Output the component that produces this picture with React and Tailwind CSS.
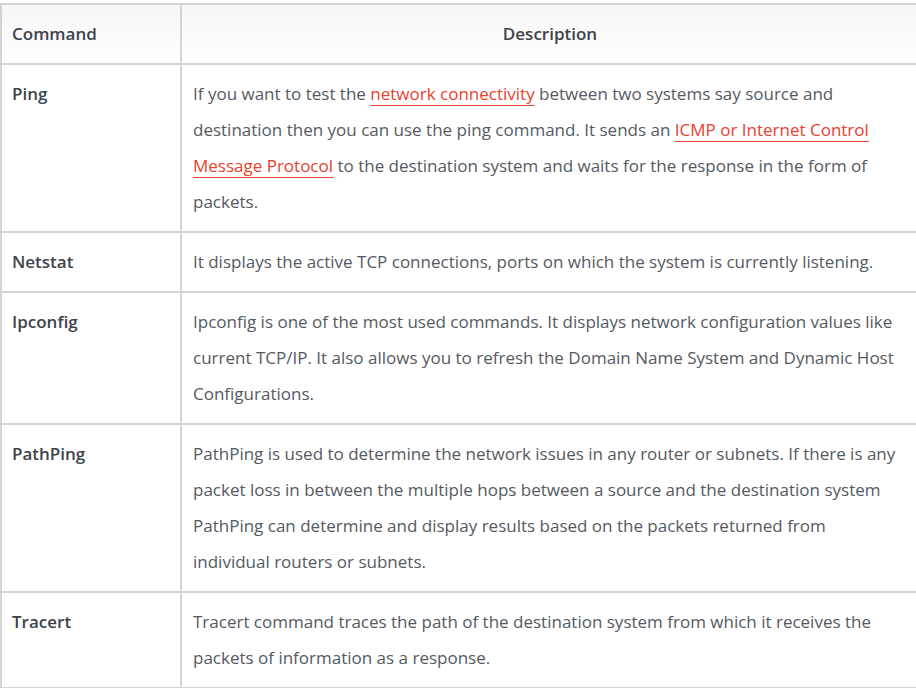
import React from "react";

const L = ({ children }) => (
  <a className="text-[#e8412e] underline decoration-[#e8412e] decoration-1 underline-offset-[5px]">{children}</a>
);

const rows = [
  {
    cmd: "Ping",
    desc: (
      <>
        If you want to test the <L>network connectivity</L> between two systems say source and destination then you can use the ping command. It sends an <L>ICMP or Internet Control Message Protocol</L> to the destination system and waits for the response in the form of packets.
      </>
    ),
  },
  { cmd: "Netstat", desc: "It displays the active TCP connections, ports on which the system is currently listening." },
  {
    cmd: "Ipconfig",
    desc: "Ipconfig is one of the most used commands. It displays network configuration values like current TCP/IP. It also allows you to refresh the Domain Name System and Dynamic Host Configurations.",
  },
  {
    cmd: "PathPing",
    desc: "PathPing is used to determine the network issues in any router or subnets. If there is any packet loss in between the multiple hops between a source and the destination system PathPing can determine and display results based on the packets returned from individual routers or subnets.",
  },
  {
    cmd: "Tracert",
    desc: "Tracert command traces the path of the destination system from which it receives the packets of information as a response.",
  },
];

export default function App() {
  return (
    <div className="w-[916px] h-[688px] overflow-hidden bg-white pt-[3px]" style={{ fontFamily: "'Open Sans', Lato, sans-serif" }}>
      <table className="w-[920px] border-collapse text-[17px] leading-[36px] text-[#545a62]">
        <thead>
          <tr className="bg-gradient-to-b from-[#f6f6f6] to-white">
            <th className="w-[180px] border-2 border-[#d4d4d4] px-[10px] py-[11px] text-left font-semibold text-[#3d434b]">Command</th>
            <th className="border-2 border-[#d4d4d4] px-[11px] py-[11px] text-center font-semibold text-[#3d434b]">Description</th>
          </tr>
        </thead>
        <tbody>
          {rows.map((r) => (
            <tr key={r.cmd}>
              <td className="border-2 border-[#d4d4d4] px-[10px] py-[11px] align-top font-semibold text-[#3d434b]">{r.cmd}</td>
              <td className="border-2 border-[#d4d4d4] pl-[11px] pr-[15px] py-[11px] align-top">{r.desc}</td>
            </tr>
          ))}
        </tbody>
      </table>
    </div>
  );
}
